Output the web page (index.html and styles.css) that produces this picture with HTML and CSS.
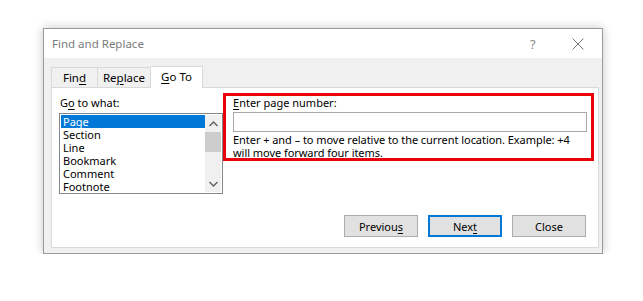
FILE: index.html
```html
<!DOCTYPE html>
<html>
<head>
<meta charset="utf-8">
<link rel="stylesheet" href="styles.css">
</head>
<body>
<div class="dialog">
  <div class="titlebar">
    <span class="title">Find and Replace</span>
    <span class="tb-help">?</span>
    <span class="tb-close"><svg width="12" height="12" viewBox="0 0 12 12"><path d="M0.5 0.5L11.5 11.5M11.5 0.5L0.5 11.5" stroke="#7a7a7a" stroke-width="1" fill="none"/></svg></span>
  </div>
  <div class="body">
    <div class="tabs">
      <div class="tab">Fin<u>d</u></div>
      <div class="tab">Re<u>p</u>lace</div>
      <div class="tab active"><u>G</u>o To</div>
    </div>
    <div class="panel">
      <div class="top">
        <div class="left">
          <div class="label">G<u>o</u> to what:</div>
          <div class="listbox">
            <div class="items">
              <div class="item sel">Page</div>
              <div class="item">Section</div>
              <div class="item">Line</div>
              <div class="item">Bookmark</div>
              <div class="item">Comment</div>
              <div class="item">Footnote</div>
            </div>
            <div class="scroll">
              <div class="arrow"><svg width="9" height="6" viewBox="0 0 9 6"><path d="M0.5 5L4.5 1L8.5 5" stroke="#606060" stroke-width="1.4" fill="none"/></svg></div>
              <div class="thumb"></div>
              <div class="track"></div>
              <div class="arrow"><svg width="9" height="6" viewBox="0 0 9 6"><path d="M0.5 1L4.5 5L8.5 1" stroke="#606060" stroke-width="1.4" fill="none"/></svg></div>
            </div>
          </div>
        </div>
        <div class="right">
          <div class="label"><u>E</u>nter page number:</div>
          <div class="input"></div>
          <div class="hint">Enter + and – to move relative to the current location. Example: +4 will move forward four items.</div>
        </div>
      </div>
      <div class="buttons">
        <div class="btn">Previou<u>s</u></div>
        <div class="btn default">Nex<u>t</u></div>
        <div class="btn">Close</div>
      </div>
    </div>
  </div>
</div>
</body>
</html>
```
FILE: styles.css
```css
* { box-sizing: border-box; }
html, body { margin: 0; background: #ffffff; }
body {
  padding: 28px 0 0 43px;
  font-family: "Noto Sans", "Open Sans", sans-serif;
  font-size: 11px;
  color: #000;
}
u { text-underline-offset: 2px; text-decoration-thickness: 1px; }
.dialog {
  width: 560px;
  height: 226px;
  border: 1px solid #9a9a9a;
  background: #f0f0f0;
  box-shadow: 0 0 10px rgba(0,0,0,0.22);
  display: flex;
  flex-direction: column;
}
.titlebar {
  height: 29px;
  background: #ffffff;
  display: flex;
  align-items: center;
  padding-left: 8px;
}
.title { color: #7c7c7c; font-size: 11.5px; flex: 1; }
.tb-help { color: #8a8a8a; font-size: 13px; width: 14px; margin-right: 28px; }
.tb-close { width: 12px; height: 12px; margin-right: 18px; display: flex; }
.body {
  flex: 1;
  padding: 7px 3px 5px 7px;
  display: flex;
  flex-direction: column;
}
.tabs { display: flex; align-items: flex-end; height: 22px; }
.tab {
  height: 20px;
  border: 1px solid #d9d9d9;
  border-bottom: none;
  background: #f0f0f0;
  display: flex;
  align-items: center;
  justify-content: center;
  font-size: 11.5px;
}
.tab:nth-child(1) { width: 47px; }
.tab:nth-child(2) { width: 53px; border-left: none; }
.tab.active {
  width: 52px;
  height: 22px;
  background: #ffffff;
  position: relative;
  top: 1px;
  z-index: 1;
  border-left: none;
  padding-bottom: 2px;
}
.panel {
  flex: 1;
  background: #ffffff;
  border: 1px solid #d9d9d9;
  display: flex;
  flex-direction: column;
  padding: 6px 4px 10px 7px;
}
.top { display: flex; }
.left { width: 164px; padding-top: 1px; }
.label { height: 18px; padding-left: 1px; line-height: 16px; }
.listbox {
  border: 1px solid #828790;
  height: 81px;
  display: flex;
  padding: 1px;
}
.items { flex: 1; }
.item { height: 13px; line-height: 13px; padding-left: 2px; }
.item.sel { background: #0078d7; color: #fff; }
.scroll { width: 16px; background: #f0f0f0; display: flex; flex-direction: column; }
.arrow { height: 17px; display: flex; align-items: center; justify-content: center; }
.thumb { height: 20px; background: #cdcdcd; }
.track { flex: 1; }
.right {
  flex: 1;
  border: 3px solid #e8000b;
  margin-top: -1px;
  height: 68px;
  padding: 0 4px 0 7px;
}
.right .label { height: 16px; padding-left: 0; line-height: 14px; }
.input { height: 20px; border: 1px solid #a8a8a8; background: #fff; }
.hint { line-height: 12.5px; margin-top: 2px; letter-spacing: -0.05px; }
.buttons {
  margin-top: auto;
  margin-right: 8px;
  display: flex;
  justify-content: flex-end;
  gap: 10px;
}
.btn {
  width: 74px;
  height: 22px;
  background: #e1e1e1;
  border: 1px solid #adadad;
  display: flex;
  align-items: center;
  justify-content: center;
}
.btn.default { border: 2px solid #0078d7; }
```
